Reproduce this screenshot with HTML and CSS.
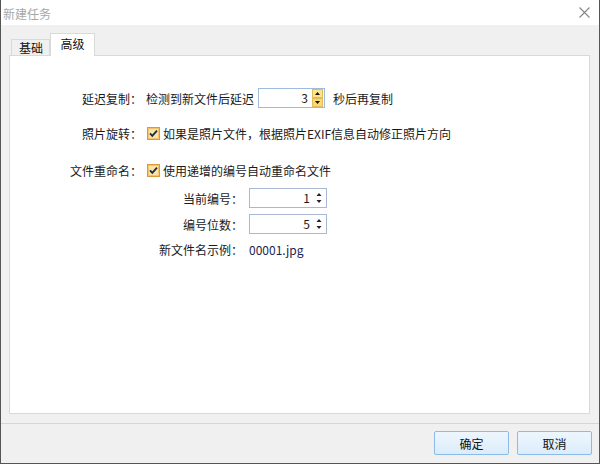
FILE: index.html
```html
<!DOCTYPE html>
<html lang="zh-CN">
<head>
    <meta charset="UTF-8">
    <title>新建任务</title>
    <link rel="stylesheet" href="styles.css">
</head>
<body>

<div class="window">
    <div class="titlebar">
        <span class="title">新建任务</span>
        <svg class="close" width="11" height="11" viewBox="0 0 11 11">
            <path d="M0.5 0.5L10.5 10.5M10.5 0.5L0.5 10.5" stroke="#858585" stroke-width="1.1" fill="none"/>
        </svg>
    </div>

    <div class="content">
        <div class="tabs">
            <div class="tab">基础</div>
            <div class="tab active">高级</div>
        </div>

        <div class="panel">
            <!-- delay -->
            <div class="row row-delay">
                <span class="label">延迟复制：</span>
                <span class="text">检测到新文件后延迟</span>
                <div class="spin spin-hot">
                    <span class="spin-value">3</span>
                    <svg class="spin-btns" width="11" height="18" viewBox="0 0 11 18">
                        <rect x="0.5" y="0.5" width="10" height="8" fill="#fde38c" stroke="#e0bd5a"/>
                        <rect x="0.5" y="9.5" width="10" height="8" fill="#fcd970" stroke="#e0bd5a"/>
                        <path d="M3 6L5.5 3L8 6Z" fill="#111"/>
                        <path d="M3 12L5.5 15L8 12Z" fill="#111"/>
                    </svg>
                </div>
                <span class="text after">秒后再复制</span>
            </div>

            <!-- rotate -->
            <div class="row row-rotate">
                <span class="label">照片旋转：</span>
                <svg class="check" width="13" height="13" viewBox="0 0 13 13">
                    <rect x="0.5" y="0.5" width="12" height="12" fill="#f3c46a" stroke="#d79b3c"/>
                    <rect x="2" y="2" width="9" height="9" fill="#fbe3a8"/>
                    <path d="M3 6.3L5.3 8.8L10 3.6" stroke="#1d2a4a" stroke-width="1.8" fill="none"/>
                </svg>
                <span class="text check-text">如果是照片文件，根据照片EXIF信息自动修正照片方向</span>
            </div>

            <!-- rename -->
            <div class="row row-rename">
                <span class="label">文件重命名：</span>
                <svg class="check" width="13" height="13" viewBox="0 0 13 13">
                    <rect x="0.5" y="0.5" width="12" height="12" fill="#f3c46a" stroke="#d79b3c"/>
                    <rect x="2" y="2" width="9" height="9" fill="#fbe3a8"/>
                    <path d="M3 6.3L5.3 8.8L10 3.6" stroke="#1d2a4a" stroke-width="1.8" fill="none"/>
                </svg>
                <span class="text check-text">使用递增的编号自动重命名文件</span>
            </div>

            <div class="row sub row-start">
                <span class="label">当前编号：</span>
                <div class="spin">
                    <span class="spin-value">1</span>
                    <svg class="spin-btns" width="12" height="18" viewBox="0 0 12 18">
                        <path d="M3.5 7L6 4L8.5 7Z" fill="#222"/>
                        <path d="M3.5 11L6 14L8.5 11Z" fill="#222"/>
                    </svg>
                </div>
            </div>

            <div class="row sub row-digits">
                <span class="label">编号位数：</span>
                <div class="spin">
                    <span class="spin-value">5</span>
                    <svg class="spin-btns" width="12" height="18" viewBox="0 0 12 18">
                        <path d="M3.5 7L6 4L8.5 7Z" fill="#222"/>
                        <path d="M3.5 11L6 14L8.5 11Z" fill="#222"/>
                    </svg>
                </div>
            </div>

            <div class="row sub row-sample">
                <span class="label">新文件名示例：</span>
                <span class="sample">00001.jpg</span>
            </div>
        </div>
    </div>

    <div class="footer">
        <button class="btn">确定</button>
        <button class="btn">取消</button>
    </div>
</div>

</body>
</html>
```

FILE: styles.css
```css
body {
    margin: 0;
    padding: 0;
    background-color: #f0f0f0;
    font-family: "Noto Sans CJK SC", "Noto Sans", sans-serif;
    font-size: 12px;
    color: #1a1a1a;
}

.window {
    width: 600px;
    height: 464px;
    box-sizing: border-box;
    border-left: 1px solid #555;
    border-right: 1px solid #555;
    border-bottom: 1px solid #555;
    background-color: #f0f0f0;
    display: flex;
    flex-direction: column;
}

.titlebar {
    height: 25px;
    background-color: white;
    display: flex;
    align-items: center;
    justify-content: space-between;
    padding: 0 9px 0 2px;
}

.title {
    color: #a8a8a8;
    line-height: 25px;
    padding-top: 1px;
}

.close {
    display: block;
}

.content {
    height: 398px;
    padding: 8px 9px 0 8px;
    box-sizing: border-box;
}

.tabs {
    display: flex;
    align-items: flex-end;
    height: 22px;
    padding-left: 2px;
}

.tab {
    box-sizing: border-box;
    width: 39px;
    height: 16px;
    border: 1px solid #d9d9d9;
    border-bottom: none;
    background-color: #f0f0f0;
    text-align: center;
    line-height: 15px;
    padding-left: 1px;
    color: #111;
}

.tab.active {
    width: 45px;
    height: 23px;
    margin-bottom: -1px;
    background-color: white;
    position: relative;
    line-height: 20px;
    padding-left: 0;
}

.panel {
    height: 359px;
    box-sizing: border-box;
    border: 1px solid #d9d9d9;
    background-color: white;
    padding-top: 32px;
}

.row {
    display: flex;
    align-items: center;
    height: 20px;
}

.label {
    width: 132px;
    text-align: right;
    margin-right: 4px;
    flex-shrink: 0;
}

.row.sub .label {
    width: 233px;
    margin-right: 6px;
}

.row-rotate { margin-top: 15px; }
.row-rename { margin-top: 17px; }
.row-start { margin-top: 8px; }
.row-digits { margin-top: 6px; }
.row-sample { margin-top: 5px; }

.text {
    white-space: nowrap;
}

.text.after {
    margin-left: 8px;
}

.check {
    display: block;
    margin-left: 1px;
    flex-shrink: 0;
}

.check-text {
    margin-left: 3px;
}

.spin {
    box-sizing: border-box;
    width: 78px;
    height: 20px;
    border: 1px solid #a9b9d4;
    background-color: white;
    display: flex;
    align-items: center;
    justify-content: flex-end;
    padding-right: 1px;
}

.spin-hot {
    width: 67px;
    margin-left: 4px;
    border-color: #9fbadf;
}

.spin-value {
    padding-right: 3px;
    line-height: 18px;
}

.spin-hot .spin-value {
    padding-right: 4px;
}

.spin-btns {
    display: block;
}

.sample {
    color: #1e1e50;
}

.footer {
    flex: 1;
    border-top: 1px solid #d5d5d5;
    display: flex;
    justify-content: flex-end;
    gap: 8px;
    padding: 7px 7px 0 0;
}

.btn {
    width: 75px;
    height: 24px;
    border: 1px solid #8dbbe8;
    border-radius: 2px;
    background: linear-gradient(#eef6fd, #dbecfb);
    font-family: "Noto Sans CJK SC", sans-serif;
    font-size: 12px;
    color: #111;
    padding: 0;
    cursor: pointer;
}
```
